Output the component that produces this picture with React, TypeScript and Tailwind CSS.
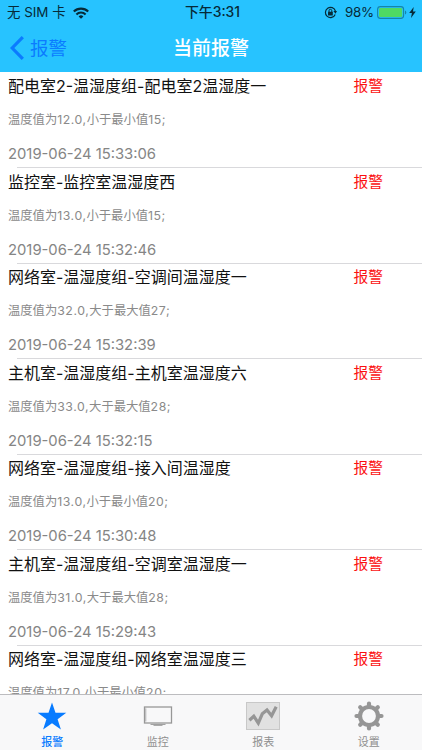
import React from 'react';

interface Alarm {
  name: string;
  detail: string;
  time: string;
}

const alarms: Alarm[] = [
  { name: '配电室2-温湿度组-配电室2温湿度一', detail: '温度值为12.0,小于最小值15;', time: '2019-06-24 15:33:06' },
  { name: '监控室-监控室温湿度西', detail: '温度值为13.0,小于最小值15;', time: '2019-06-24 15:32:46' },
  { name: '网络室-温湿度组-空调间温湿度一', detail: '温度值为32.0,大于最大值27;', time: '2019-06-24 15:32:39' },
  { name: '主机室-温湿度组-主机室温湿度六', detail: '温度值为33.0,大于最大值28;', time: '2019-06-24 15:32:15' },
  { name: '网络室-温湿度组-接入间温湿度', detail: '温度值为13.0,小于最小值20;', time: '2019-06-24 15:30:48' },
  { name: '主机室-温湿度组-空调室温湿度一', detail: '温度值为31.0,大于最大值28;', time: '2019-06-24 15:29:43' },
  { name: '网络室-温湿度组-网络室温湿度三', detail: '温度值为17.0,小于最小值20;', time: '' },
];

function StatusBar() {
  return (
    <div className="grid h-[23px] grid-cols-3 items-center text-[13.5px] leading-[23px] text-[#062a38]">
      <div className="flex items-center pl-[7px] pt-px">
        <span className="w-[59px] whitespace-nowrap text-[13.4px]">无 SIM 卡</span>
        <svg className="ml-[7px] h-[12px] w-[16px]" viewBox="0 0 16 12" fill="none" stroke="currentColor" strokeWidth="2.1">
          <path d="M0.8 4.6a10.3 10.3 0 0 1 14.4 0" />
          <path d="M3.4 7.4a6.6 6.6 0 0 1 9.2 0" />
          <path d="M8 11.8 5.6 9.4a3.4 3.4 0 0 1 4.8 0z" fill="currentColor" stroke="none" />
        </svg>
      </div>
      <div className="pl-[3px] pt-px text-center text-[13.9px] font-medium">下午3:31</div>
      <div className="flex items-center justify-end pr-[6px] pt-px">
        <svg className="mr-[8px] h-[13px] w-[13px]" viewBox="0 0 13 13" fill="none" stroke="currentColor">
          <path d="M11.2 8.5A5.1 5.1 0 1 1 11.4 5" strokeWidth="1.2" />
          <path d="M9.4 5.1h3.6l-1.5 2.7z" fill="currentColor" stroke="none" />
          <rect x="4" y="5.8" width="4.8" height="3.7" rx="0.5" fill="currentColor" stroke="none" />
          <path d="M5 6V4.7a1.4 1.4 0 0 1 2.8 0V6" strokeWidth="1" />
        </svg>
        <span className="w-[29px] whitespace-nowrap text-[13.3px] tracking-[-0.2px]">98%</span>
        <svg className="ml-[3px] h-[13px] w-[30px]" viewBox="0 0 30 13">
          <rect x="0.6" y="0.6" width="26" height="11.8" rx="2.8" fill="none" stroke="#1685a8" strokeWidth="1.1" />
          <rect x="2" y="2" width="23.2" height="9" rx="1.3" fill="#4fd964" />
          <path d="M28 4.5c1.8.6 1.8 3.4 0 4z" fill="#1685a8" />
        </svg>
        <svg className="ml-[2px] h-[11px] w-[7px]" viewBox="0 0 7 11" fill="currentColor">
          <path d="M4.7 0 .2 6.1h2.7L2 11l4.8-6.4H4z" />
        </svg>
      </div>
    </div>
  );
}

function NavBar() {
  return (
    <div className="relative flex h-[49px] items-center justify-center">
      <button className="absolute left-[10px] top-0 flex h-[49px] items-center text-[#0b7bff]">
        <svg className="h-[24px] w-[14px]" viewBox="0 0 14 24" fill="none" stroke="currentColor" strokeWidth="3.2">
          <path d="M12.8 1.2 2.2 12l10.6 10.8" />
        </svg>
        <span className="ml-[6px] pt-px text-[18.5px] leading-[49px]">报警</span>
      </button>
      <h1 className="pt-[2px] text-[19px] font-medium leading-[49px] text-white">当前报警</h1>
    </div>
  );
}

// Digits run a little wider than the characters around them
function Detail({ text }: { text: string }) {
  return (
    <>
      {text.split(/([\d.,;]+)/).map((part, i) =>
        i % 2 ? <span key={i} className="tracking-[0.55px]">{part}</span> : part
      )}
    </>
  );
}

function AlarmRow({ alarm }: { alarm: Alarm }) {
  return (
    <li className="flex h-[95.5px] shrink-0 flex-col whitespace-nowrap">
      <div className="flex h-[29px] items-center justify-between pl-[8px] pr-[39px]">
        <span className="text-[16px] leading-[29px] text-[#111]">{alarm.name}</span>
        <span className="text-[14.7px] leading-[29px] text-[#fb1010]">报警</span>
      </div>
      <div className="h-[38px] pl-[8px] text-[12.3px] leading-[38px] text-[#8a8a8a]">
        <Detail text={alarm.detail} />
      </div>
      <div className="h-[28px] pl-[8px] text-[14.8px] leading-[30px] text-[#858585]">{alarm.time}</div>
      <div className="ml-[17px] h-px bg-[#d9d9dc]" />
    </li>
  );
}

function StarIcon() {
  return (
    <svg className="h-[28px] w-[30px]" viewBox="0 0 30 28" fill="#087bff">
      <path d="M15 .5 18.5 10.8H29.3L20.6 17.2 23.9 27.5 15 21.2 6.1 27.5 9.4 17.2.7 10.8H11.5z" />
    </svg>
  );
}

function MonitorIcon() {
  return (
    <svg className="h-[20px] w-[30px]" viewBox="0 0 30 20" fill="none" stroke="#979797">
      <rect x="1.5" y="1" width="27" height="16" strokeWidth="1.3" />
      <path d="M2.8 2.3v13.2" strokeWidth="0.7" />
      <path d="M7.5 18.4h15M10.5 19.3h9" strokeWidth="1" />
    </svg>
  );
}

function ChartIcon() {
  return (
    <svg className="h-[28px] w-[34px]" viewBox="0 0 34 28" fill="none">
      <rect x="0.5" y="0.5" width="33" height="27" fill="#e1e1e1" stroke="#c8c8c8" />
      <path d="M3.4 18.2 7.8 14.2 12.3 21.2 16.3 11.8 21 8 25.6 13.8 30.2 4.8" stroke="#969696" strokeWidth="3.2" />
    </svg>
  );
}

function GearIcon() {
  return (
    <svg className="h-[30px] w-[30px]" viewBox="-15 -15 30 30" fill="none" stroke="#969696">
      <circle r="9" strokeWidth="4.2" />
      <path d="M0-10V-12.5M0 10V12.5M-10 0H-12.5M10 0H12.5" strokeWidth="4.2" strokeLinecap="round" />
      <path d="M-7-7-8.8-8.8M7-7 8.8-8.8M-7 7-8.8 8.8M7 7 8.8 8.8" strokeWidth="4.2" strokeLinecap="round" />
    </svg>
  );
}

const tabs = [
  { label: '报警', icon: <StarIcon />, active: true },
  { label: '监控', icon: <MonitorIcon />, active: false },
  { label: '报表', icon: <ChartIcon />, active: false },
  { label: '设置', icon: <GearIcon />, active: false },
];

function TabBar() {
  return (
    <nav className="grid h-[56px] shrink-0 grid-cols-4 border-t border-[#bcbcbf] bg-[#f8f8f9]">
      {tabs.map((tab) => (
        <div key={tab.label} className="flex flex-col items-center pr-px pt-[6px]">
          <div className="flex h-[30px] items-center justify-center">{tab.icon}</div>
          <span className={`pt-[4px] text-[11px] leading-[15px] ${tab.active ? 'font-medium text-[#087bff]' : 'text-[#8f8f8f]'}`}>
            {tab.label}
          </span>
        </div>
      ))}
    </nav>
  );
}

export default function App() {
  return (
    <div className="flex h-[750px] w-[422px] flex-col overflow-hidden bg-white font-[Inter,'Noto_Sans_CJK_SC',sans-serif]">
      <header className="h-[72px] shrink-0 bg-[#27c3ff]">
        <StatusBar />
        <NavBar />
      </header>
      <ul className="flex min-h-0 flex-1 flex-col overflow-hidden">
        {alarms.map((alarm, i) => (
          <AlarmRow key={i} alarm={alarm} />
        ))}
      </ul>
      <TabBar />
    </div>
  );
}
